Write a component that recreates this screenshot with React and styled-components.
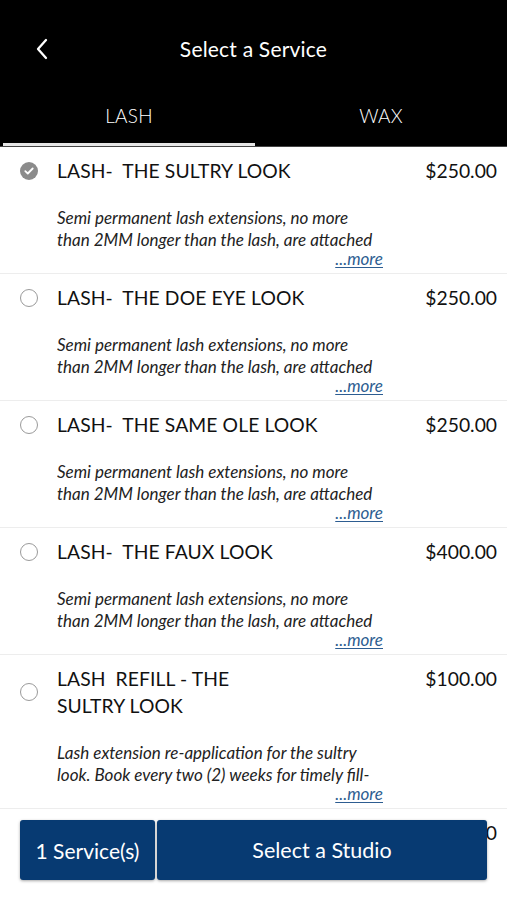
import React from "react";
import styled, { createGlobalStyle } from "styled-components";

const Global = createGlobalStyle`
  html, body { margin: 0; padding: 0; background: #fff; }
  body { font-family: Lato, "Open Sans", sans-serif; -webkit-font-smoothing: antialiased; }
  * { box-sizing: border-box; }
`;

const Page = styled.div`
  width: 507px;
  min-height: 900px;
  position: relative;
  background: #fff;
`;

const Header = styled.header`
  background: #000;
  color: #fff;
`;

const TitleBar = styled.div`
  height: 96px;
  display: flex;
  align-items: center;
  justify-content: center;
  position: relative;
`;

const BackButton = styled.button`
  position: absolute;
  left: 30px;
  top: 36px;
  width: 24px;
  height: 26px;
  padding: 0;
  border: 0;
  background: transparent;
  display: flex;
  align-items: center;
  justify-content: center;
`;

const Title = styled.h1`
  margin: 0;
  font-size: 21px;
  font-weight: 400;
  letter-spacing: 0.2px;
`;

const Tabs = styled.div`
  display: flex;
  border-bottom: 1px solid #444;
`;

const Tab = styled.div`
  flex: 1;
  height: 50px;
  display: flex;
  align-items: center;
  justify-content: center;
  padding-bottom: 8px;
  font-size: 19px;
  font-weight: 300;
  letter-spacing: 0.2px;
  color: #fff;
  border-bottom: 3px solid ${(p) => (p.$active ? "#e6e6e6" : "transparent")};
  margin-left: ${(p) => (p.$active ? "3px" : "0")};
`;

const List = styled.ul`
  list-style: none;
  margin: 0;
  padding: 0 0 100px;
`;

const Row = styled.li`
  padding: 10px 10px 6px 0;
  border-bottom: 1px solid #ededed;
`;

const Top = styled.div`
  display: flex;
  align-items: flex-start;
`;

const RadioCell = styled.div`
  width: 57px;
  flex: none;
  display: flex;
  justify-content: center;
  align-self: center;
  padding-left: 1px;
`;

const Radio = styled.span`
  width: 18px;
  height: 18px;
  border-radius: 50%;
  display: flex;
  align-items: center;
  justify-content: center;
  background: ${(p) => (p.$checked ? "#8b8b8b" : "#fff")};
  border: ${(p) => (p.$checked ? "none" : "1.5px solid #9a9a9a")};
`;

const ServiceName = styled.div`
  flex: 1;
  padding-right: 20px;
  font-size: 19.3px;
  line-height: 27px;
  color: #111;
  letter-spacing: 0.1px;
  white-space: pre-wrap;
`;

const Price = styled.div`
  flex: none;
  font-size: 19.3px;
  line-height: 27px;
  color: #111;
`;

const Body = styled.div`
  margin: 23px 0 0 57px;
  width: 328px;
`;

const Desc = styled.p`
  margin: 0;
  width: 324px;
  font-style: italic;
  font-size: 17px;
  line-height: 22px;
  color: #222;
  max-height: 44px;
  overflow: hidden;
`;

const More = styled.a`
  display: block;
  text-align: right;
  font-style: italic;
  font-size: 17px;
  line-height: 16px;
  color: #2d5d91;
  text-decoration: underline;
  text-underline-offset: 2px;
  padding-right: 2px;
`;

const Footer = styled.div`
  position: absolute;
  left: 20px;
  top: 820px;
  display: flex;
  gap: 2px;
  background: #fff;
`;

const FooterButton = styled.button`
  height: 60px;
  width: ${(p) => p.$w}px;
  border: 0;
  border-radius: 3px;
  background: #073a72;
  color: #fff;
  font-family: Lato, "Open Sans", sans-serif;
  font-size: ${(p) => p.$fs}px;
  box-shadow: 0 1px 3px rgba(0, 0, 0, 0.35);
  display: flex;
  align-items: center;
  justify-content: center;
`;

const desc1 =
  "Semi permanent lash extensions, no more than 2MM longer than the lash, are attached to each natural lash.";
const desc2 =
  "Lash extension re-application for the sultry look. Book every two (2) weeks for timely fill-ins.";

const services = [
  { name: "LASH-  THE SULTRY LOOK", price: "$250.00", desc: desc1, checked: true },
  { name: "LASH-  THE DOE EYE LOOK", price: "$250.00", desc: desc1 },
  { name: "LASH-  THE SAME OLE LOOK", price: "$250.00", desc: desc1 },
  { name: "LASH-  THE FAUX LOOK", price: "$400.00", desc: desc1 },
  { name: "LASH  REFILL - THE\nSULTRY LOOK", price: "$100.00", desc: desc2 },
  { name: "LASH  REFILL - THE\nDOE EYE LOOK", price: "$100.00", desc: desc2 },
];

const Check = () => (
  <svg width="10" height="8" viewBox="0 0 10 8">
    <path d="M1.3 4.2 L3.8 6.5 L8.7 1.5" fill="none" stroke="#fff" strokeWidth="1.8" strokeLinecap="round" strokeLinejoin="round" />
  </svg>
);

export default function App() {
  return (
    <Page>
      <Global />
      <Header>
        <TitleBar>
          <BackButton aria-label="Back">
            <svg width="14" height="22" viewBox="0 0 14 22">
              <path d="M11 2 L3 11 L11 20" fill="none" stroke="#fff" strokeWidth="2.3" strokeLinecap="round" strokeLinejoin="round" />
            </svg>
          </BackButton>
          <Title>Select a Service</Title>
        </TitleBar>
        <Tabs>
          <Tab $active>LASH</Tab>
          <Tab>WAX</Tab>
        </Tabs>
      </Header>
      <List>
        {services.map((s, i) => (
          <Row key={i}>
            <Top>
              <RadioCell>
                <Radio $checked={s.checked}>{s.checked && <Check />}</Radio>
              </RadioCell>
              <ServiceName>{s.name}</ServiceName>
              <Price>{s.price}</Price>
            </Top>
            <Body>
              <Desc>{s.desc}</Desc>
              <More href="#">...more</More>
            </Body>
          </Row>
        ))}
      </List>
      <Footer>
        <FooterButton $w={135} $fs={21}>1 Service(s)</FooterButton>
        <FooterButton $w={330} $fs={21.5}>Select a Studio</FooterButton>
      </Footer>
    </Page>
  );
}
